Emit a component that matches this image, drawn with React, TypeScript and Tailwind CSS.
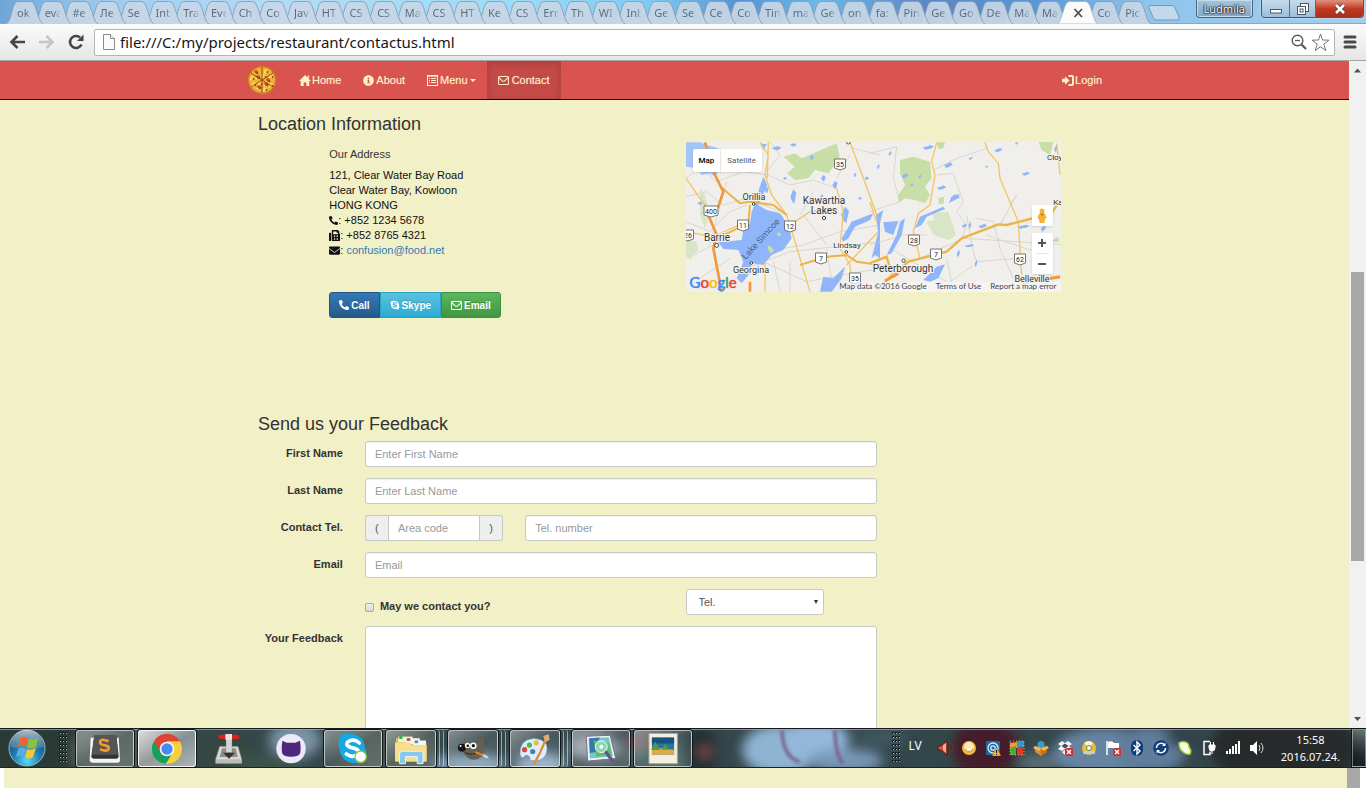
import React from "react";
import { FaEnvelope, FaFax, FaInfoCircle, FaPhoneAlt, FaSkype } from "react-icons/fa";

const leftTabs = [
  "ok", "eva", "#e", "Ле", "Se", "Int", "Tra", "Eve", "Ch", "Co", "Jav", "HT", "CS", "CS", "Ma", "CS", "HT", "Ke", "CS", "Err", "Th",
  "WI", "Inb", "Ge", "Se", "Ce", "Co", "Tim", "ma", "Ge", "on", "fa:", "Pin", "Ge", "Go", "De", "Ma", "Ma", "", "Co", "Pic",
];

function Tab({ label, index }: { label: string; index: number }) {
  const active = label === "";
  return (
    <button
      type="button"
      aria-label={active ? "Close tab" : label}
      className="relative h-6 min-w-0 flex-1 text-left"
      style={{ zIndex: active ? 60 : 50 - index }}
    >
      <svg className={`absolute top-0 h-6 ${active ? "-left-1 w-[41px]" : "-left-[2px] w-[37px]"}`} viewBox={active ? "0 0 41 24" : "0 0 37 24"} aria-hidden="true">
        {active ? (
          <>
            <path d="M0 24C2 23 3 21 4 18L8 6Q9.500 1.500 12.500 1.500H28.500Q31.500 1.500 33 6L37 18Q38.500 23 41 24Z" fill="#fbfbfb" stroke="#9fb0c0" strokeWidth="0.8" />
            <path d="M17.500 9l7.500 8M25 9l-7.500 8" stroke="#4a4a4a" strokeWidth="1.700" />
          </>
        ) : (
          <>
            <path d="M0 24C2 23 3 21 4 18L7.500 6Q9 1.500 12 1.500H24.500Q27.500 1.500 29 6L33 18Q34.500 23 37 24Z" fill="#c7d6e6" fillOpacity="0.92" />
            <path d="M0 24C2 23 3 21 4 18L7.500 6Q9 1.500 12 1.500H24.500Q27.500 1.500 29 6L33 18Q34.500 23 37 24" fill="none" stroke="#8697a8" strokeWidth="0.8" />
          </>
        )}
      </svg>
      {!active && (
        <span className="relative ml-[9px] block w-[15px] overflow-hidden whitespace-nowrap bg-linear-to-r from-[#596875] from-60% to-[#596875]/20 bg-clip-text font-['Noto_Sans',sans-serif] text-[11px] leading-[25px] text-transparent">
          {label}
        </span>
      )}
    </button>
  );
}

function TitleBar() {
  return (
    <div className="flex h-6 shrink-0 border-b border-[#9aa3ad] bg-[linear-gradient(90deg,#6fa5d8_0%,#9ccdf3_8%,#b1dcf8_20%,#9bdcf8_38%,#7cc9f2_48%,#5593d6_54%,#6cb9ea_60%,#5c86c4_68%,#5a97d4_76%,#8ec4ec_84%,#a6cdec_100%)] pl-2">
      <div className="flex min-w-0 basis-[1136px]">
        {leftTabs.map((t, i) => (
          <Tab key={i} label={t} index={i} />
        ))}
      </div>
      <button type="button" aria-label="New tab" className="ml-1 mt-[5px] h-4 w-8">
        <svg className="h-4 w-8" viewBox="0 0 32 16" aria-hidden="true">
          <path d="M2 .5H24Q26 .5 27 3L31 12Q32 15 29 15H8Q6 15 5 12L1 3Q0 .5 2 .5Z" fill="#c2d8ec" stroke="#7d96b0" />
        </svg>
      </button>
      <div className="ml-auto flex items-start">
        <button
          type="button"
          className="mr-2 h-[18px] rounded-b-[4px] border border-t-0 border-[#4a6680] bg-linear-to-b from-[#a9c4dc] to-[#84a5c2] px-[7px] font-['Noto_Sans',sans-serif] text-[11px] leading-[17px] text-white shadow-[inset_0_0_0_1px_#c4dcf0] [text-shadow:0_0_1px_#000,0_0_2px_#000,0_0_2px_#000]"
        >
          Ludmila
        </button>
        <div className="mr-[2px] flex h-[18px] overflow-hidden rounded-b-[4px] border border-t-0 border-[#46586c] shadow-[0_0_2px_#eef]">
          <button type="button" aria-label="Minimize" className="flex w-7 items-center justify-center border-r border-[#5a6f86] bg-linear-to-b from-[#c6dbed] to-[#9dbdd8]">
            <svg className="h-4 w-4" viewBox="0 0 16 16"><rect x="2.500" y="8.500" width="11" height="3.500" fill="#fff" stroke="#4d5866" /></svg>
          </button>
          <button type="button" aria-label="Restore" className="flex w-[26px] items-center justify-center border-r border-[#5a6f86] bg-linear-to-b from-[#c6dbed] to-[#9dbdd8]">
            <svg className="h-4 w-4" viewBox="0 0 16 16" fill="#fff" stroke="#4d5866">
              <rect x="5.500" y="2.500" width="8" height="8" /><rect x="2.500" y="5.500" width="8" height="8" /><rect x="5" y="8" width="3" height="3" />
            </svg>
          </button>
          <button type="button" aria-label="Close" className="flex w-[47px] items-center justify-center bg-linear-to-b from-[#e0907c] via-[#c43a22] to-[#a93018]">
            <svg className="h-4 w-4" viewBox="0 0 16 16"><path d="M4 4l8 8M12 4l-8 8" stroke="#5b3a3a" strokeWidth="4.500" /><path d="M4 4l8 8M12 4l-8 8" stroke="#fff" strokeWidth="2.600" /></svg>
          </button>
        </div>
      </div>
    </div>
  );
}

function Toolbar() {
  return (
    <div className="flex h-[37px] shrink-0 items-center border-b border-[#a5a5a5] bg-linear-to-b from-[#fbfbfb] to-[#e6e6e6] px-[9px]">
      <button type="button" aria-label="Back">
        <svg className="h-4 w-4" viewBox="0 0 16 16" fill="none" stroke="#454545" strokeWidth="2.600"><path d="M16 8H3M8.500 2L2.500 8l6 6" /></svg>
      </button>
      <button type="button" aria-label="Forward" className="ml-[14px]">
        <svg className="h-4 w-4" viewBox="0 0 16 16" fill="none" stroke="#c6c6c6" strokeWidth="2.600"><path d="M0 8H13M7.500 2l6 6-6 6" /></svg>
      </button>
      <button type="button" aria-label="Reload" className="ml-[13px]">
        <svg className="h-4 w-4" viewBox="0 0 16 16"><path d="M13.500 10.500A6 6 0 1 1 12 3.500" fill="none" stroke="#454545" strokeWidth="2.600" /><path d="M15.500 0.500V7H9Z" fill="#454545" /></svg>
      </button>
      <div className="ml-[10px] flex h-[27px] min-w-0 flex-1 items-center rounded-[2px] border border-[#b4b4b4] bg-white pl-2 pr-1">
        <svg className="h-4 w-3" viewBox="0 0 12 16" fill="#fbfbfb" stroke="#8a8a8a"><path d="M.5.5H7.500L11.500 4.500V15.500H.5Z" /><path d="M7.500.5V4.500H11.500" /></svg>
        <input
          aria-label="Address"
          defaultValue="file:///C:/my/projects/restaurant/contactus.html"
          className="ml-[5px] min-w-0 flex-1 bg-transparent font-['Noto_Sans',sans-serif] text-[15px] leading-5 text-[#161616] outline-none"
        />
        <svg className="h-4 w-4" viewBox="0 0 16 16" fill="none" stroke="#5a5a5a"><circle cx="6.500" cy="6.500" r="5.300" strokeWidth="1.400" /><path d="M4 6.500h5" strokeWidth="1.300" /><path d="M10.500 10.500l4.500 4.500" strokeWidth="2.300" /></svg>
        <svg className="ml-1 h-[19px] w-[19px]" viewBox="0 0 19 19" fill="#fff" stroke="#777" strokeLinejoin="round"><path d="M9.500 1l2 6 6.500.2-5.200 3.900 2 6.400-5.300-3.700-5.300 3.700 2-6.400L1 7.200 7.500 7Z" /></svg>
      </div>
      <button type="button" aria-label="Menu" className="ml-2">
        <svg className="h-[14px] w-[14px]" viewBox="0 0 14 14" stroke="#4a4a4a" strokeWidth="3" strokeLinecap="round"><path d="M2 2h10M2 7h10M2 12h10" /></svg>
      </button>
    </div>
  );
}

function Pizza() {
  const dots = [[8, 6], [18, 5], [23, 10], [20, 14], [23, 19], [17, 23], [11, 21], [6, 18], [4, 12], [10, 11], [16, 10], [12, 17], [18, 18]];
  return (
    <svg className="h-7 w-7" viewBox="0 0 28 28" aria-hidden="true">
      <circle cx="14" cy="14" r="14" fill="#cf8420" />
      <circle cx="14" cy="14" r="12.800" fill="#f2b136" />
      {dots.map(([x, y], i) => (
        <g key={i}>
          <circle cx={x} cy={y} r="1.900" fill={i % 3 === 0 ? "#d4501f" : "#f9d060"} />
          <circle cx={x + 1.5} cy={y + 1} r="0.800" fill="#2f1c08" />
          <circle cx={x - 1.5} cy={y + 1.5} r="0.800" fill="#fbe6a2" />
        </g>
      ))}
      <path d="M14 1V27M3 7L25 21M3 21L25 7" stroke="#8d4410" strokeWidth="0.900" />
    </svg>
  );
}

function EnvelopeOutline() {
  return (
    <svg className="h-[11px] w-[11px]" viewBox="0 0 14 12" fill="none" stroke="currentColor" strokeWidth="1.300" aria-hidden="true">
      <rect x="0.700" y="1" width="12.600" height="10" rx="1" /><path d="M1 2.500L5.500 6.500Q7 7.600 8.500 6.500L13 2.500" />
    </svg>
  );
}

const navItem = "flex h-full items-center px-[11px] text-[#fcf0c8] [text-shadow:0_0_1px_rgba(252,240,200,0.5)]";

function Navbar() {
  return (
    <nav className="h-[39px] shrink-0 border-b border-[#1a0807] bg-[#d9534f]">
      <div className="mx-auto flex h-full max-w-[855px] items-center">
        <a href="#top" aria-label="Ristorante" className="ml-px mr-3"><Pizza /></a>
        <a href="#home" className={`${navItem} gap-px`}>
          <svg className="h-[11px] w-3" viewBox="0 0 12 11" fill="currentColor" aria-hidden="true"><path d="M6 0L12 6H10.300V11H7.300V7.500H4.700V11H1.700V6H0Z" /><path d="M8.500 .6h1.600V3.500H8.500Z" /></svg>
          Home
        </a>
        <a href="#about" className={`${navItem} gap-[2px]`}><FaInfoCircle className="h-[11px] w-[11px]" />About</a>
        <a href="#menu" className={`${navItem} gap-[2px]`}>
          <svg className="h-[11px] w-[11px]" viewBox="0 0 11 11" fill="none" stroke="currentColor" aria-hidden="true"><rect x=".5" y=".5" width="10" height="10" /><path d="M2 3.500h1M4 3.500h5M2 5.500h1M4 5.500h5M2 7.500h1M4 7.500h5" /><path d="M0 1.200h11" /></svg>
          Menu
          <svg className="h-[3px] w-[6px]" viewBox="0 0 6 3" fill="currentColor"><path d="M0 0H6L3 3Z" /></svg>
        </a>
        <a href="#contact" className={`${navItem} gap-[3px] bg-[#c34a47] shadow-[inset_0_2px_7px_rgba(0,0,0,0.18)]`}><EnvelopeOutline />Contact</a>
        <a href="#login" className={`${navItem} -mr-[11px] ml-auto gap-px`}>
          <svg className="h-[11px] w-3" viewBox="0 0 12 11" fill="currentColor" aria-hidden="true"><path d="M0 3.800h3V1.200L7.500 5.500 3 9.800V7.200H0Z" /><path d="M6.500 1H10Q11 1 11 2V9Q11 10 10 10H6.500" fill="none" stroke="currentColor" strokeWidth="2" /></svg>
          Login
        </a>
      </div>
    </nav>
  );
}

function Shield({ x, y, t }: { x: number; y: number; t: string }) {
  const w = t.length > 2 ? 14 : 11;
  return (
    <g>
      <path d={`M${x - w / 2} ${y - 5}H${x + w / 2}V${y + 4}Q${x + w / 4} ${y + 5} ${x} ${y + 6}Q${x - w / 4} ${y + 5} ${x - w / 2} ${y + 4}Z`} fill="#fff" stroke="#666" strokeWidth="0.900" />
      <text x={x} y={y + 3} fontSize="7" textAnchor="middle" fill="#222">{t}</text>
    </g>
  );
}

const mapLabels: [number, number, string, number][] = [
  [68, 58, "Orillia", 9], [31, 99, "Barrie", 10], [65, 131, "Georgina", 9], [138, 62, "Kawartha", 10], [138, 72, "Lakes", 10],
  [161, 106, "Lindsay", 8], [217, 130, "Peterborough", 10], [373, 18, "Cloyne", 8], [346, 140, "Belleville", 9], [373, 63, "Kal", 8],
];

const lakeSpots: [number, number, number, number][] = [
  [430, 130, 7, 10], [340, 185, 9, 22], [260, 165, 6, 10], [465, 150, 8, 12], [425, 185, 5, 7], [495, 240, 12, 25], [340, 30, 10, 5], [290, 40, 15, 6],
  [395, 68, 7, 7], [560, 130, 7, 5], [540, 190, 6, 4], [60, 205, 8, 5], [315, 130, 6, 4], [450, 225, 16, 8], [525, 120, 4, 7],
];
const eastSpots: [number, number, number, number][] = [
  [175, 37, 17, 7], [215, 158, 14, 7], [235, 90, 13, 9], [255, 188, 15, 8], [385, 45, 12, 7], [302, 70, 6, 5], [468, 116, 12, 6], [283, 272, 8, 6],
  [338, 273, 13, 7], [25, 95, 4, 8], [440, 25, 5, 4], [60, 55, 5, 7], [350, 95, 6, 3], [298, 332, 15, 5], [318, 385, 4, 12], [265, 355, 5, 12], [460, 275, 20, 6],
  [105, 122, 11, 8], [150, 125, 4, 7], [125, 150, 6, 4], [300, 270, 4, 12], [558, 40, 5, 12], [520, 280, 8, 10],
];

function MapDrawing() {
  return (
    <svg className="block h-[150px] w-full" viewBox="0 0 375 150" preserveAspectRatio="xMinYMin slice" fontFamily="Roboto, sans-serif" role="img" aria-label="Map">
      <rect width="375" height="150" fill="#f1efec" />
      <g transform="translate(-6 -7) scale(.33333)" fill="none" strokeLinejoin="round">
        <path d="M18 130L60 95 110 140 190 110 265 120 330 150 400 135 470 160M18 185L80 170 130 210 200 190 300 230M18 260L90 290 150 230 200 210M140 140L110 250 90 330M255 350L370 330 480 290 600 270M200 400L330 350 600 320M250 380L380 440 600 400M330 380V470M440 340L460 470M280 380L300 470M400 170L360 240M370 240L440 330M510 60L470 130M520 40L600 60M20 370L100 330M60 430L150 370M270 20L300 60 260 110" stroke="#dbd5cd" strokeWidth="3" />
        <path d="M310 65L345 55 365 70 400 55 470 25 480 70 445 115 405 105 385 130 345 135 320 115 345 95Z" fill="#c7dfa7" />
        <path d="M18 315L50 320 55 345 30 375 18 365ZM60 160L75 180 90 240 75 280 60 240Z" fill="#d8e6c6" />
        <path d="M18 22H60L80 30 115 40 122 100 105 125 90 115 65 120 50 100 18 95Z" fill="#a3c5fa" />
        <path d="M250 125L238 160 230 195 215 230 210 265 190 285 185 315 115 322 130 342 175 345 190 380 170 430 185 445 205 420 215 385 250 390 275 360 310 345 335 310 325 270 300 235 260 225 235 210 262 150Z" fill="#8fb6fa" />
        <path d="M265 330Q290 345 275 355 260 350 265 330M295 290l8 8-5 7-7-7Z" fill="#c7dfa7" />
        <g fill="#8fb6fa">
          {lakeSpots.map(([x, y, w, h], i) => (
            <path key={i} d={`M${x - w} ${y}L${x} ${y - h}L${x + w} ${y - h * 0.5}L${x + w * 0.3} ${y + h}L${x - w * 0.5} ${y + h * 0.6}Z`} />
          ))}
          <path d="M485 310L515 260 580 235 570 255 525 275 505 310 490 320ZM575 370L595 290 600 225 600 370 585 360ZM420 470L430 425 460 430 495 395 485 430 455 470ZM240 25L260 28 250 45Z" />
        </g>
        <path d="M18 130L60 190 90 230M240 22L265 60 255 120 275 180 320 240 345 320 390 470M255 380V470M265 20L262 130M510 22L600 265M470 160L490 230 480 340 510 390 515 470M500 390L600 285M18 290L70 300 110 300 200 260M330 270L390 230 470 220" stroke="#f2c566" strokeWidth="4" />
        <path d="M122 155L180 205 210 200 280 210 320 240M210 210L205 265 110 310M360 390L440 365 500 360 530 380 600 390" stroke="#ecb443" strokeWidth="6" />
        <path d="M75 22L105 120 130 170 115 215 85 240 110 300 100 340 125 470M210 440V470" stroke="#f0983b" strokeWidth="8" />
        <g stroke="#444" strokeWidth="3" fill="#fff"><circle cx="221" cy="207" r="4" /><circle cx="110" cy="331" r="6" /><circle cx="214" cy="384" r="4" /><circle cx="432" cy="249" r="5" /><circle cx="499" cy="351" r="4" /><circle cx="505" cy="22" r="5" /></g>
      </g>
      <g transform="translate(184 -7) scale(.33333)" fill="none" strokeLinejoin="round">
        <path d="M0 55L80 35 70 130 90 200 0 230M200 120L250 115 265 160 280 200 260 230 290 270 275 310M190 105L260 70 350 40M0 330L100 300 170 300M150 370L280 310 600 330M320 250L370 260 390 340 430 430M290 240L310 350 320 380 440 370M200 470L310 390M390 270L440 180 420 210M350 300L480 345 570 310M60 340L230 440M230 370L250 470" stroke="#dbd5cd" strokeWidth="3" />
        <path d="M90 75L130 65 180 80 185 130 165 155 180 180 165 205 135 195 105 190 85 205 85 180 105 150 90 115ZM505 20H550L540 60 515 45ZM200 22H225L220 40 205 42ZM205 190L222 185V205L207 208ZM560 305L570 320 545 320Z" fill="#c7dfa7" />
        <path d="M185 235L235 230 258 300 235 315 190 300 170 260 195 255Z" fill="#d8e6c6" />
        <g fill="#8fb6fa">
          {eastSpots.map(([x, y, w, h], i) => (
            <path key={i} d={`M${x - w} ${y}L${x - w * 0.2} ${y - h * 0.4}L${x + w * 0.4} ${y - h}L${x + w} ${y - h * 0.2}L${x + w * 0.3} ${y + h * 0.6}L${x - w * 0.5} ${y + h}Z`} />
          ))}
          <path d="M5 370L25 300 18 240 40 225 28 270 30 300 20 340ZM40 262L85 258 70 300 45 290ZM50 360L80 300 90 260 105 250 95 300 65 355ZM135 280L150 245 220 215 225 222 170 245 155 270ZM160 435L200 395 225 388 205 430 180 440ZM235 205L250 180 270 178 255 195Z" />
        </g>
        <path d="M200 22L185 80 195 120 180 210 145 235 130 290 150 370M345 22L355 50 385 85 390 130 445 260 455 420M0 200L20 260M20 470L70 410M560 25L570 120" stroke="#f2c566" strokeWidth="4" />
        <path d="M0 385L50 365 60 400M60 430L115 380 230 350 275 310 385 268 410 270 480 252 545 235 570 195" stroke="#ecb443" strokeWidth="7" />
        <path d="M45 438L85 415M455 445L570 425" stroke="#f0983b" strokeWidth="9" />
        <circle cx="101" cy="377" r="5" stroke="#444" strokeWidth="3" fill="#fff" />
      </g>
      <Shield x={154} y={22} t="35" /><Shield x={25} y={69} t="400" /><Shield x={57} y={83} t="11" /><Shield x={104} y={84} t="12" />
      <Shield x={135} y={116} t="7" /><Shield x={169} y={136} t="35" /><Shield x={228} y={98} t="28" /><Shield x={250} y={112} t="7" /><Shield x={334} y={117} t="62" /><Shield x={2} y={93} t="26" />
      <g fill="#333" stroke="#f4f2ef" strokeWidth="2" paintOrder="stroke" textAnchor="middle">
        {mapLabels.map(([x, y, t, s]) => (
          <text key={t} x={x} y={y} fontSize={s}>{t}</text>
        ))}
      </g>
      <text x="0" y="0" fontSize="9" fill="#4a6590" textAnchor="middle" transform="translate(77 99) rotate(-48)">Lake Simcoe</text>
      <rect x="160" y="140" width="215" height="10" fill="#f5f5f5" fillOpacity="0.750" />
    </svg>
  );
}

function LocationMap() {
  return (
    <div className="relative w-full max-w-[375px] overflow-hidden font-[Roboto,sans-serif]">
      <MapDrawing />
      <div className="absolute left-[7px] top-[7px] flex h-[23px] rounded-[2px] bg-white text-[8px] shadow-sm">
        <button type="button" className="border-r border-[#e6e6e6] px-[6px] font-medium text-black">Map</button>
        <button type="button" className="px-[6px] text-[#565656]">Satellite</button>
      </div>
      <div className="absolute bottom-0 left-1 flex font-[Lato,sans-serif] text-[15px] leading-5 [text-shadow:0_0_1px_currentColor]">
        <span className="text-[#4285f4]">G</span><span className="text-[#ea4335]">o</span><span className="text-[#fbbc05]">o</span><span className="text-[#4285f4]">g</span><span className="text-[#34a853]">l</span><span className="text-[#ea4335]">e</span>
      </div>
      <div className="absolute bottom-0 right-1 flex gap-[9px] whitespace-nowrap font-[Lato,sans-serif] text-[8px] leading-[11px] text-[#444]">
        <span>Map data ©2016 Google</span><a href="#terms">Terms of Use</a><a href="#report">Report a map error</a>
      </div>
      <div className="absolute right-2 top-[63px] flex w-[21px] flex-col gap-[7px]">
        <button type="button" aria-label="Street View" className="flex h-[21px] items-center justify-center rounded-[1px] bg-white shadow-sm">
          <svg className="h-4 w-[10px]" viewBox="0 0 10 16"><circle cx="5" cy="3" r="2.500" fill="#f0b43c" /><path d="M2 5.500H8L9.500 10 8 11 7.500 15H2.500L2 11 .5 10Z" fill="#f4b234" /><path d="M3 5.500h4L5 8Z" fill="#b97a18" /></svg>
        </button>
        <div className="flex flex-col rounded-[1px] bg-white px-1 shadow-sm">
          <button type="button" aria-label="Zoom in" className="flex h-[21px] items-center justify-center border-b border-[#e6e6e6]"><svg className="h-2 w-2" viewBox="0 0 8 8" stroke="#555" strokeWidth="2"><path d="M0 4h8M4 0v8" /></svg></button>
          <button type="button" aria-label="Zoom out" className="flex h-5 items-center justify-center"><svg className="h-2 w-2" viewBox="0 0 8 8" stroke="#555" strokeWidth="2"><path d="M0 4h8" /></svg></button>
        </div>
      </div>
    </div>
  );
}

const field = "h-[26px] w-full min-w-0 rounded-[3px] border border-[#c9c9c4] bg-white px-[9px] text-[11px] text-[#555] placeholder:text-[#999] outline-none shadow-[inset_0_1px_1px_rgba(0,0,0,0.06)]";
const labelCell = "col-span-2 pl-1 pr-[11px] pt-[5px] text-right leading-[15px] font-bold text-[#333]";
const button = "flex items-center gap-[2px] border px-[9px] text-[10px] font-bold text-white [text-shadow:0_-1px_0_rgba(0,0,0,0.2)]";

function ContactPage() {
  return (
    <main className="min-h-0 flex-1 overflow-hidden">
      <div className="mx-auto max-w-[855px]">
        <h3 className="mb-2 mt-[14px] px-[11px] text-[18px] leading-5 text-[#333]">Location Information</h3>
        <div className="grid grid-cols-12">
          <div className="col-span-5 col-start-2 px-[11px]">
            <h5 className="mb-[6px] mt-1 leading-4 text-[#333]">Our Address</h5>
            <address className="leading-[15px] not-italic text-[#111]">
              <p>121, Clear Water Bay Road</p>
              <p>Clear Water Bay, Kowloon</p>
              <p>HONG KONG</p>
              <p className="flex items-center"><FaPhoneAlt className="h-[9px] w-[9px]" /><span>: +852 1234 5678</span></p>
              <p className="flex items-center"><FaFax className="h-[11px] w-[11px]" /><span>: +852 8765 4321</span></p>
              <p className="flex items-center"><FaEnvelope className="h-[11px] w-[11px]" /><span>:&nbsp;</span><a href="mailto:confusion@food.net" className="text-[#337ab7]">confusion@food.net</a></p>
            </address>
            <div className="mt-[34px] flex h-[26px]">
              <a href="tel:+85212345678" className={`${button} rounded-l-[3px] border-[#245580] bg-linear-to-b from-[#337ab7] to-[#265a88]`}><FaPhoneAlt className="h-[10px] w-[10px]" />Call</a>
              <a href="#skype" className={`${button} border-[#28a4c9] bg-linear-to-b from-[#5bc0de] to-[#2aabd2]`}><FaSkype className="h-[10px] w-[10px]" />Skype</a>
              <a href="mailto:confusion@food.net" className={`${button} rounded-r-[3px] border-[#3e8f3e] bg-linear-to-b from-[#5cb85c] to-[#419641]`}><EnvelopeOutline />Email</a>
            </div>
          </div>
          <div className="col-span-6 col-start-7 px-[11px]"><LocationMap /></div>
        </div>
        <hr className="mx-[11px] mt-11 border-[#eeeed8]" />
        <h3 className="mb-[7px] mt-[51px] px-[11px] text-[18px] leading-5 text-[#333]">Send us your Feedback</h3>
        <form className="grid w-3/4 grid-cols-12 gap-y-[11px]">
          <label htmlFor="first" className={labelCell}>First Name</label>
          <div className="col-span-10 px-[11px]"><input id="first" placeholder="Enter First Name" className={field} /></div>
          <label htmlFor="last" className={labelCell}>Last Name</label>
          <div className="col-span-10 px-[11px]"><input id="last" placeholder="Enter Last Name" className={field} /></div>
          <label htmlFor="tel" className={labelCell}>Contact Tel.</label>
          <div className="col-span-3 flex px-[11px]">
            <span className="flex w-[23px] shrink-0 items-center justify-center rounded-l-[3px] border border-r-0 border-[#c9c9c4] bg-[#eee] text-[#555]">(</span>
            <input aria-label="Area code" placeholder="Area code" className="h-[26px] w-full min-w-0 border border-[#c9c9c4] bg-white px-[9px] text-[11px] outline-none placeholder:text-[#999]" />
            <span className="flex w-[23px] shrink-0 items-center justify-center rounded-r-[3px] border border-l-0 border-[#c9c9c4] bg-[#eee] text-[#555]">)</span>
          </div>
          <div className="col-span-7 px-[11px]"><input id="tel" placeholder="Tel. number" className={field} /></div>
          <label htmlFor="email" className={labelCell}>Email</label>
          <div className="col-span-10 px-[11px]"><input id="email" placeholder="Email" className={field} /></div>
          <div className="col-span-6 col-start-3 px-[11px] pt-[9px]">
            <label className="flex items-center gap-[6px] leading-4 font-bold text-[#333]">
              <input type="checkbox" className="mt-[2px] h-[9px] w-[9px] appearance-none rounded-[2px] border border-[#aaa] bg-linear-to-b from-[#eee] to-[#d8d8d8]" />
              May we contact you?
            </label>
          </div>
          <div className="relative col-span-3 px-[11px]">
            <select aria-label="Contact method" className="h-[26px] w-full appearance-none rounded-[3px] border border-[#c9c9c4] bg-white pl-3 text-[11px] text-[#555] outline-none"><option>Tel.</option><option>Email</option></select>
            <svg className="pointer-events-none absolute right-[17px] top-[11px] h-1 w-1" viewBox="0 0 4 4"><path d="M0 0H4L2 4Z" fill="#333" /></svg>
          </div>
          <label htmlFor="feedback" className={labelCell}>Your Feedback</label>
          <div className="col-span-10 px-[11px]"><textarea id="feedback" rows={12} className="block w-full resize-none rounded-[3px] border border-[#c9c9c4] bg-white p-2 outline-none" /></div>
        </form>
      </div>
    </main>
  );
}

function ScrollBar() {
  return (
    <div className="flex w-[17px] shrink-0 flex-col items-center bg-[#f1f1f1]" aria-hidden="true">
      <svg className="h-[17px] w-[17px] shrink-0" viewBox="0 0 17 17"><path d="M5 11.500L8.500 7.500 12 11.500Z" fill="#505050" /></svg>
      <div className="grow-[194] basis-0" />
      <div className="w-[13px] grow-[289] basis-0 bg-[#a8a8a8]" />
      <div className="grow-[150] basis-0" />
      <svg className="h-[17px] w-[17px] shrink-0" viewBox="0 0 17 17"><path d="M5 6L8.500 10 12 6Z" fill="#505050" /></svg>
    </div>
  );
}

function Grip() {
  return (
    <svg className="h-8 w-[10px] shrink-0" viewBox="0 0 10 32" aria-hidden="true">
      {Array.from({ length: 8 }, (_, r) => [1, 4, 7].map((x) => (
        <g key={`${r}-${x}`}><rect x={x} y={r * 4} width="2" height="2" fill="#10191b" /><rect x={x + 1} y={r * 4 + 1} width="1" height="1" fill="#a7b5b8" /></g>
      )))}
    </svg>
  );
}

function TaskbarBackdrop() {
  const blobs: [number, number, number, number, string][] = [
    [30, 20, 90, 30, "#2c3a36"], [120, 25, 50, 30, "#4c5a55"], [225, 30, 30, 25, "#34463f"], [295, 12, 26, 18, "#7a93a6"], [265, 35, 40, 10, "#3b5248"],
    [385, 20, 50, 30, "#46544f"], [470, 36, 36, 10, "#86a4be"], [540, 36, 26, 12, "#8eaac2"], [595, 20, 26, 13, "#8d99a5"], [640, 15, 15, 6, "#7c3844"],
    [665, 28, 40, 14, "#43625f"], [700, 25, 18, 25, "#1d2f31"], [705, 24, 8, 6, "#7a4a4c"], [780, 22, 38, 26, "#8fb3d2"], [815, 12, 34, 20, "#93b8da"], [845, 33, 38, 12, "#7898b8"],
    [885, 10, 30, 8, "#405860"], [930, 20, 30, 22, "#30464a"], [985, 20, 34, 30, "#441a2c"], [1040, 35, 22, 10, "#5c6a75"], [1105, 25, 52, 26, "#6684a2"],
    [1150, 22, 36, 24, "#617d9c"], [1185, 10, 20, 10, "#33424c"], [1285, 20, 75, 40, "#262c2c"],
  ];
  return (
    <svg className="absolute inset-0 h-full w-full" viewBox="0 0 1366 40" preserveAspectRatio="none" aria-hidden="true">
      <defs><filter id="soft" x="-20%" y="-50%" width="140%" height="200%"><feGaussianBlur stdDeviation="6" /></filter><filter id="line" x="-20%" y="-20%" width="140%" height="140%"><feGaussianBlur stdDeviation="1.500" /></filter></defs>
      <rect width="1366" height="40" fill="#34474b" />
      <g filter="url(#soft)">{blobs.map(([x, y, rx, ry, c], i) => <ellipse key={i} cx={x} cy={y} rx={rx} ry={ry} fill={c} />)}</g>
      <path d="M782 2Q783 30 800 34M835 2Q835 25 843 36" fill="none" stroke="#7a6a94" strokeWidth="4" filter="url(#line)" />
      <rect width="1366" height="1" fill="#15191c" /><rect y="1" width="1366" height="1" fill="#a6b1b8" fillOpacity="0.700" /><rect y="39" width="1366" height="1" fill="#1a2224" />
    </svg>
  );
}

const apps: { name: string; kind: string; box: string; art: React.ReactNode }[] = [
  { name: "Sublime Text", kind: "open", box: "268 48 96 96", art: (<>
    <path d="M273 62L270 128Q270 137 280 137H352Q362 137 361 128L357 62Z" fill="#f4f4f4" /><path d="M284 54H350L357 118Q357 125 350 125H282Q275 125 275 118Z" fill="#333" /><path d="M284 54H350L355 113H277Z" fill="#555" />
    <path d="M327 73Q302 62 301 76 301 83 316 85 330 88 327 96 322 105 301 97" fill="none" stroke="#f59a2e" strokeWidth="8" /></>) },
  { name: "Chrome", kind: "active", box: "453 52 96 96", art: (<>
    <circle cx="501" cy="100" r="45" fill="#f9cf3b" /><path d="M462 77A45 45 0 0 0 497 145L520 108 501 100Z" fill="#16a05d" /><path d="M462 77L482 111 501 100 501 77H540A45 45 0 0 0 462 77Z" fill="#db4437" /><circle cx="501" cy="100" r="22" fill="#f4f4f4" /><circle cx="501" cy="100" r="17" fill="#4889f4" /></>) },
  { name: "Installer", kind: "plain", box: "640 48 96 96", art: (<>
    <path d="M660 88H715L726 125V139H648V125Z" fill="#d8d8d4" stroke="#777" strokeWidth="2" /><path d="M667 94H708L714 120H660Z" fill="#8b8e8a" /><rect x="648" y="127" width="78" height="12" fill="#bcbdb8" /><rect x="679" y="55" width="18" height="52" fill="#d4d4d4" stroke="#777" /><path d="M670 107H706L688 125Z" fill="#343434" /><rect x="656" y="53" width="63" height="13" rx="6" fill="#dc201e" /><rect x="677" y="51" width="20" height="17" fill="#e5e5e5" /></>) },
  { name: "GitHub", kind: "plain", box: "825 52 96 96", art: (<>
    <circle cx="873" cy="99" r="44" fill="#eceaf8" /><path d="M847 75L860 81H886L900 75 902 95 901 111Q898 123 873 123 849 123 846 111L845 95Z" fill="#4d2779" /></>) },
  { name: "Skype", kind: "open", box: "1012 52 96 96", art: (<>
    <path d="M1030 54Q1044 50 1055 56 1092 58 1096 97 1104 112 1100 130 1092 147 1073 142 1025 143 1020 102 1010 70 1030 54Z" fill="#14a8e6" /><path d="M1079 82Q1062 67 1044 79 1036 91 1056 96 1080 100 1077 113 1062 130 1040 115" fill="none" stroke="#fff" strokeWidth="11" strokeLinecap="round" /><circle cx="1083" cy="123" r="17" fill="#fff" stroke="#96c33a" strokeWidth="4" /></>) },
  { name: "Explorer", kind: "stack", box: "134 52 98 98", art: (<>
    <path d="M137 68H190V82H230V139H137Z" fill="#dfbd5b" /><path d="M144 63H188V80H144Z" fill="#f5f1d8" /><path d="M166 68H210V86H166Z" fill="#f8f6e8" /><path d="M190 75H229V90H190Z" fill="#f8f6e8" /><path d="M147 62h10v8h-10Z" fill="#27ae43" /><path d="M170 68h11v8h-11Z" fill="#cb4437" /><path d="M194 75h11v8h-11Z" fill="#3c90d2" /><path d="M134 81H180L184 90H231V139H134Z" fill="#f6df8d" /><path d="M148 146V116Q148 108 158 108H212Q220 108 220 116V146H202V124H166V146Z" fill="#88c8ec" stroke="#e3f6ff" strokeWidth="3" /></>) },
  { name: "GIMP", kind: "stack", box: "320 52 98 98", art: (<>
    <path d="M342 66L355 85 378 82 402 65V107Q398 133 370 134 347 132 337 105Z" fill="#665f52" /><circle cx="335" cy="97" r="12" fill="#151515" /><circle cx="331" cy="92" r="3" fill="#fff" /><circle cx="352" cy="90" r="8" fill="#fff" /><circle cx="370" cy="91" r="10" fill="#fff" /><circle cx="353" cy="91" r="4" fill="#111" /><circle cx="370" cy="91" r="5" fill="#111" /><path d="M345 112Q370 124 385 108" fill="none" stroke="#222" strokeWidth="3" /><path d="M376 110L400 120" stroke="#db842c" strokeWidth="7" /><path d="M398 116L412 121 418 131 402 126Z" fill="#d7d7d7" /></>) },
  { name: "Paint", kind: "stack", box: "507 52 98 98", art: (<>
    <path d="M510 118Q508 72 552 69 594 71 593 101 591 137 555 137 536 138 541 127 528 113 520 128Q514 131 510 118Z" fill="#dceefc" stroke="#719ab8" strokeWidth="2" /><circle cx="524" cy="103" r="8" fill="#d74c42" /><circle cx="539" cy="89" r="8" fill="#4fb54c" /><circle cx="560" cy="82" r="8" fill="#eabb3d" /><circle cx="549" cy="109" r="8" fill="#487fa6" /><path d="M589 72L572 111 554 145" stroke="#e38b35" strokeWidth="7" strokeLinecap="round" fill="none" /><path d="M581 61L598 56 601 73 588 80Z" fill="#d7ad7a" /></>) },
  { name: "Photo Viewer", kind: "open", box: "705 52 98 98", art: (<>
    <path d="M709 62L782 59 799 130 713 138Z" fill="#eef7f8" stroke="#7f6792" strokeWidth="3" /><path d="M716 68L778 65 791 124 720 130Z" fill="#72c9c5" /><path d="M718 68L752 66 733 90 755 108 720 113Z" fill="#3279b1" /><path d="M731 75L777 83 787 119 740 124Z" fill="#68b86b" /><circle cx="755" cy="94" r="18" fill="#c0eff5" fillOpacity="0.500" stroke="#e9fbff" strokeWidth="3" /><circle cx="755" cy="94" r="6" fill="#fff" /><path d="M770 112L789 137" stroke="#61568e" strokeWidth="10" strokeLinecap="round" /></>) },
  { name: "Pictures", kind: "open", box: "888 52 98 98", art: (<>
    <path d="M894 53H981V146H894Z" fill="#f5efdf" stroke="#b69f7e" strokeWidth="3" /><path d="M903 66H971V118H903Z" fill="#2475a8" /><path d="M903 66H971V84H903Z" fill="#17517d" /><path d="M903 104L930 99 971 103V118H903Z" fill="#e3aa42" /><path d="M914 78L928 104H901ZM944 84L956 103H932Z" fill="#4b9c4b" /></>) },
];

function TaskButton({ app }: { app: (typeof apps)[number] }) {
  const icon = <svg className="h-8 w-8" viewBox={app.box} aria-hidden="true">{app.art}</svg>;
  if (app.kind === "plain") return <button type="button" aria-label={app.name} className="flex h-full w-[58px] items-center justify-center">{icon}</button>;
  const glass = app.kind === "active"
    ? "border-white/90 bg-linear-to-br from-white/80 via-white/40 to-white/60"
    : "border-white/60 bg-linear-to-br from-white/40 via-white/10 to-white/15";
  return (
    <div className="flex h-full w-[58px]">
      <button type="button" aria-label={app.name} className={`flex h-full min-w-0 flex-1 items-center justify-center rounded-[3px] border shadow-[0_0_0_1px_#101819] ${glass}`}>{icon}</button>
      {app.kind === "stack" && (<><span className="ml-px w-[3px] rounded-r-[3px] border-r border-white/50" /><span className="w-1 rounded-r-[3px] border-r border-white/50" /></>)}
    </div>
  );
}

const redCross = <g><rect x="8" y="8" width="8" height="8" rx="2" fill="#d42b2b" /><path d="M10 10l4 4M14 10l-4 4" stroke="#fff" strokeWidth="1.500" /></g>;
const tray: { name: string; art: React.ReactNode }[] = [
  { name: "Audio manager", art: <><path d="M1 6h3l6-5v14l-6-5H1Z" fill="#d4563f" stroke="#5b1a13" /><path d="M6 5l3-2v10l-3-3Z" fill="#f6aa94" /><path d="M12 5q2 3 0 6M14 3q3 5 0 10" stroke="#762a22" fill="none" strokeWidth="1.200" /></> },
  { name: "Messenger", art: <><circle cx="8" cy="8" r="7" fill="#efb83b" /><circle cx="8" cy="7" r="5" fill="#fde9bd" /><path d="M4 9q4 5 8 0" fill="#fff" stroke="#d28a1c" /></> },
  { name: "Network monitor", art: <><rect x="1" y="1" width="14" height="14" rx="1" fill="#1c68aa" /><circle cx="8" cy="8" r="5" fill="none" stroke="#d7edfb" strokeWidth="1.300" /><circle cx="8" cy="8" r="2.200" fill="none" stroke="#d7edfb" strokeWidth="1.300" /><path d="M11.500 7L16 16H7Z" fill="#f4b62f" stroke="#8a5d12" strokeWidth=".5" /><path d="M11.500 10v3M11.500 14v1" stroke="#222" /></> },
  { name: "System utility", art: <><path d="M1 3l7-1v6H1Z" fill="#ef9a39" /><path d="M8 1h7v6l-7 1Z" fill="#2f9ad0" /><path d="M1 8l6-2v9H1Z" fill="#57a638" /><path d="M8 8l6-1v8H8Z" fill="#d83b25" /><path d="M1 1h14v14H1Z" fill="none" stroke="#d1b76e" strokeDasharray="1 2" /></> },
  { name: "Packages", art: <><circle cx="8" cy="4.500" r="3.500" fill="#3f9cc8" /><path d="M2 6l6 2 6-2v6l-6 4-6-4Z" fill="#d5902c" /><path d="M8 8l6-2v6l-6 4Z" fill="#b8741d" /><path d="M2 6l6 2-2 3-6-3ZM14 6L8 8l2 3 6-3Z" fill="#efba55" /></> },
  { name: "Dropbox", art: <><path d="M5 1L8 3 11 1 15 4 12 6 15 9 11 11 8 9 5 11 1 9 4 6 1 4ZM5 12l3-2 3 2-3 3Z" fill="#f5f5f5" /><path d="M8 3.500L11.500 6 8 8.500 4.500 6Z" fill="#44505c" />{redCross}</> },
  { name: "Disc", art: <><circle cx="8" cy="8" r="7" fill="#e0c334" /><path d="M8 8L3 3Q8-1 12 3Z" fill="#fff7bf" /><circle cx="8" cy="8" r="2.500" fill="#f8f8f8" stroke="#777" /><rect x="2" y="11" width="12" height="3" rx="1" fill="#ccc" /></> },
  { name: "Action center", art: <><path d="M2 1v14" stroke="#fff" strokeWidth="1.500" /><path d="M3 2q4-2 6 1h5v6q-4 1-6-1H3Z" fill="#fff" />{redCross}</> },
  { name: "Bluetooth", art: <><rect x="2" y="0" width="12" height="16" rx="6" fill="#103b7c" /><path d="M4.500 5l6.500 6-3 3V2l3 3-6.500 6" fill="none" stroke="#fff" strokeWidth="1.400" /></> },
  { name: "Sync", art: <><circle cx="8" cy="8" r="7.800" fill="#163e78" /><path d="M3.500 8a4.500 4.500 0 0 1 8-3M12.500 8a4.500 4.500 0 0 1-8 3" fill="none" stroke="#f0f7ff" strokeWidth="1.500" /><path d="M12.500 2.500v3.500h-3.500ZM3.500 13.500v-3.500h3.500Z" fill="#f0f7ff" /></> },
  { name: "Graphics", art: <path d="M2 3Q4 1 8 2 12 3 12 7 15 11 13 14 9 15 6 12 2 9 2 3Z" fill="#f8ffe7" stroke="#9fca2c" strokeWidth="1.500" /> },
  { name: "Power", art: <><path d="M9 1.500H3v13h6v-3" fill="none" stroke="#fff" strokeWidth="1.500" /><path d="M8 5h6v3q0 3-3 3T8 8ZM9.500 2v3M12.500 2v3M11 11v3" fill="#fff" stroke="#fff" /></> },
  { name: "Network", art: <path d="M1 11h2v3H1ZM4 9h2v5H4ZM7 6h2v8H7ZM10 4h2v10h-2ZM13 1h2v13h-2Z" fill="#fff" /> },
  { name: "Volume", art: <><path d="M1 5h3l4-4v14l-4-4H1Z" fill="#fff" /><path d="M10 5q2 3 0 6M12 3q4 5 0 10" fill="none" stroke="#ddd" /></> },
];

function Taskbar() {
  return (
    <footer className="relative flex h-10 shrink-0 items-center overflow-hidden font-['Noto_Sans',sans-serif]">
      <TaskbarBackdrop />
      <div className="relative flex h-full w-full items-center">
        <button type="button" aria-label="Start" className="ml-2">
          <svg className="h-[38px] w-[38px]" viewBox="0 0 38 38">
            <defs><radialGradient id="orb" cx="50%" cy="85%" r="80%"><stop stopColor="#59dcfb" /><stop offset=".45" stopColor="#247fb0" /><stop offset="1" stopColor="#123e60" /></radialGradient><linearGradient id="shine" x2="0" y2="1"><stop stopColor="#fff" stopOpacity=".65" /><stop offset="1" stopColor="#fff" stopOpacity=".1" /></linearGradient></defs>
            <circle cx="19" cy="19" r="18" fill="url(#orb)" stroke="#8cb9cd" /><path d="M2 18A17 17 0 0 1 36 18Q19 23 2 18Z" fill="url(#shine)" />
            <path d="M12 9q4-3 8 0l-2 9q-4-3-8 0Z" fill="#ec672e" /><path d="M21 10q4 2 9-1l-2 9q-5 3-9 0Z" fill="#8bc23e" /><path d="M10 20q4-3 8 0l-2 8q-4-3-8 0Z" fill="#57aee6" /><path d="M19 20q4 2 9-1l-3 9q-4 3-8 0Z" fill="#f8c731" />
          </svg>
        </button>
        <div className="ml-3"><Grip /></div>
        <div className="ml-2 flex h-[38px] gap-1 pt-px">{apps.map((a) => <TaskButton key={a.name} app={a} />)}</div>
        <div className="ml-auto"><Grip /></div>
        <span className="ml-2 mr-[15px] pb-1 text-[12px] leading-4 text-white">LV</span>
        <div className="flex gap-2">
          {tray.map((t) => <button type="button" key={t.name} aria-label={t.name} className="h-4 w-4"><svg className="h-4 w-4" viewBox="0 0 16 16" aria-hidden="true">{t.art}</svg></button>)}
        </div>
        <div className="ml-4 mr-3 text-center text-[11px] leading-[17px] text-white"><p>15:58</p><p>2016.07.24.</p></div>
        <button type="button" aria-label="Show desktop" className="h-[38px] w-[14px] border border-white/40 bg-linear-to-b from-white/25 to-black/50 shadow-[0_0_0_1px_#111]" />
      </div>
    </footer>
  );
}

export default function App() {
  return (
    <div className="flex h-screen flex-col overflow-hidden bg-white font-['Liberation_Sans',Arial,sans-serif] text-[11px]">
      <TitleBar />
      <Toolbar />
      <div className="flex min-h-0 flex-1">
        <div className="flex min-w-0 flex-1 flex-col bg-[#f2f0c6]"><Navbar /><ContactPage /></div>
        <ScrollBar />
      </div>
      <Taskbar />
      <div className="flex h-5 shrink-0 pl-1 pr-[6px]"><div className="flex-1 bg-[#f2f0c6]" /><div className="w-[13px] bg-[#a8a8a8]" /></div>
    </div>
  );
}
